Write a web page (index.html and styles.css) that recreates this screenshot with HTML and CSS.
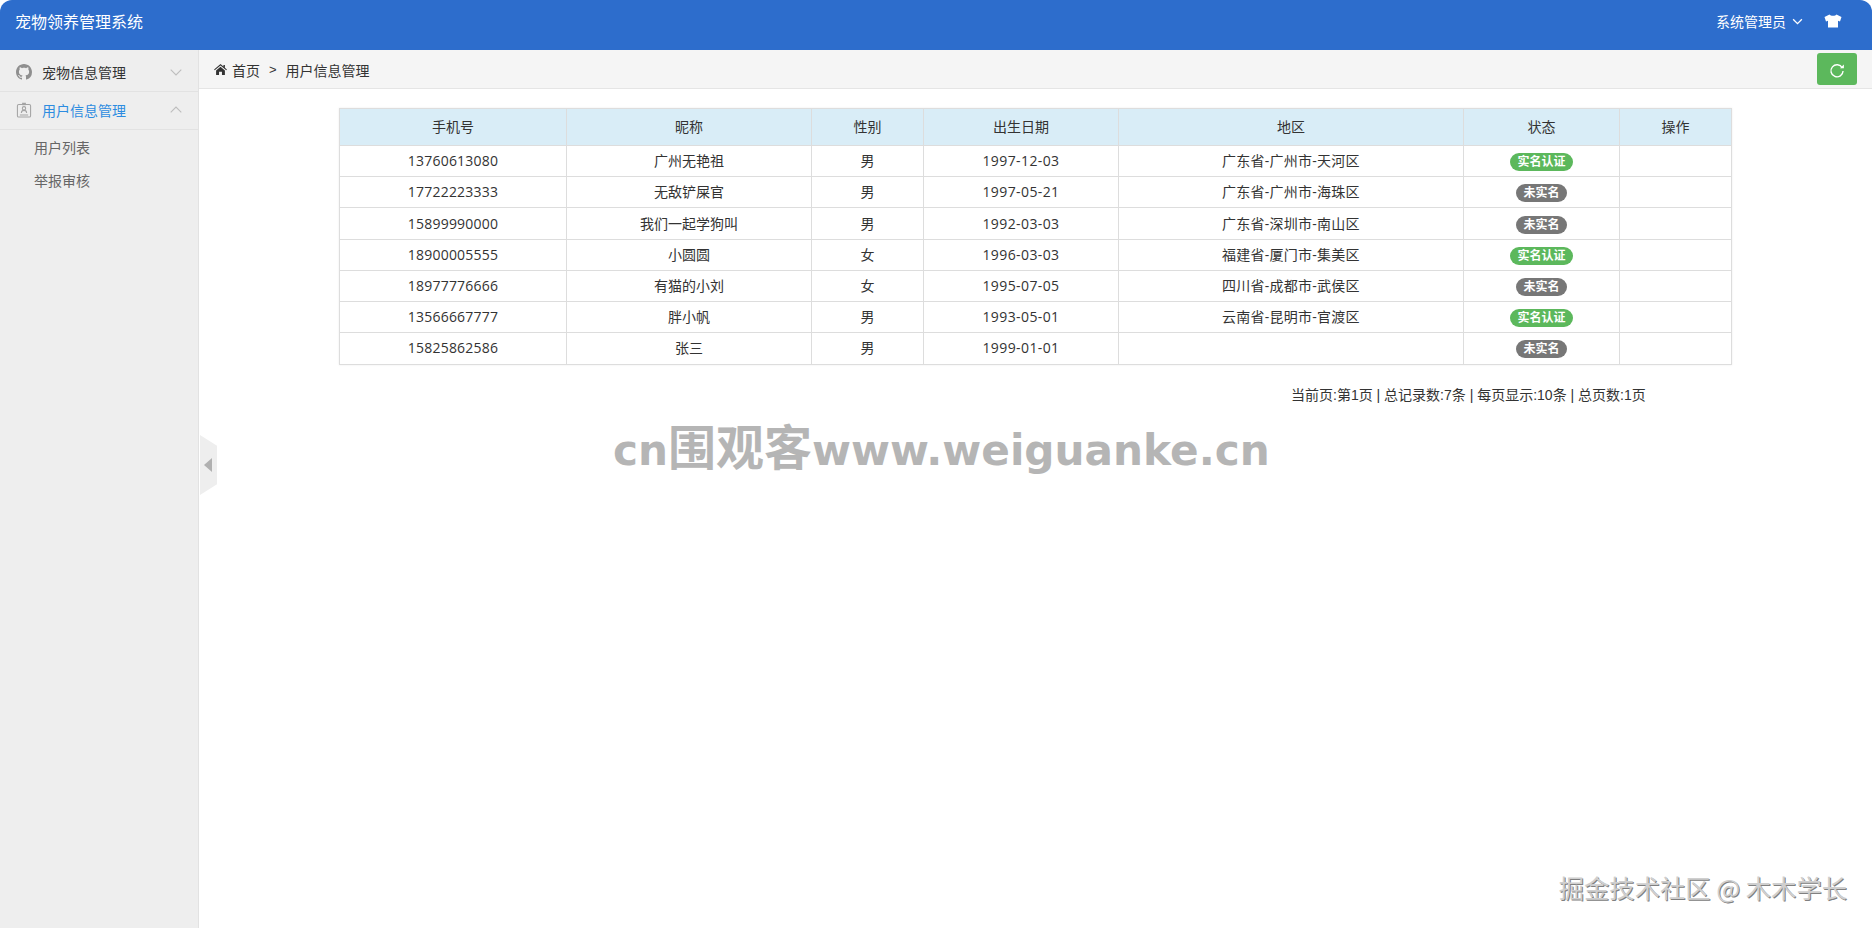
FILE: index.html
```html
<!DOCTYPE html>
<html lang="zh-CN">
<head>
<meta charset="utf-8">
<title>宠物领养管理系统</title>
<link rel="stylesheet" href="styles.css">
</head>
<body>
<div class="app">
  <header class="topbar">
    <div class="brand">宠物领养管理系统</div>
    <div class="top-right">
      <span class="user">系统管理员</span>
      <svg class="user-caret" viewBox="0 0 12 8"><path d="M1 1.5 6 6.5 11 1.5" fill="none" stroke="#fff" stroke-width="1.5"/></svg>
      <svg class="shirt" viewBox="0 0 18 14"><path d="M5.5 0.5 0.5 3 2 7.5 4 6.8V13.5H14V6.8L16 7.5 17.5 3 12.5 0.5C11.5 2.2 6.5 2.2 5.5 0.5Z" fill="#fff"/></svg>
    </div>
  </header>
  <div class="body-row">
    <aside class="sidebar">
      <div class="menu-item first">
        <svg class="menu-icon" viewBox="0 0 16 16"><path fill="#8f8f8f" d="M8 0C3.58 0 0 3.58 0 8c0 3.54 2.29 6.53 5.47 7.59.4.07.55-.17.55-.38 0-.19-.01-.82-.01-1.49-2.01.37-2.53-.49-2.69-.94-.09-.23-.48-.94-.82-1.13-.28-.15-.68-.52-.01-.53.63-.01 1.08.58 1.23.82.72 1.21 1.87.87 2.33.66.07-.52.28-.87.51-1.07-1.78-.2-3.64-.89-3.64-3.95 0-.87.31-1.59.82-2.15-.08-.2-.36-1.02.08-2.12 0 0 .67-.21 2.2.82.64-.18 1.32-.27 2-.27s1.36.09 2 .27c1.53-1.04 2.2-.82 2.2-.82.44 1.1.16 1.92.08 2.12.51.56.82 1.27.82 2.15 0 3.07-1.87 3.75-3.65 3.95.29.25.54.73.54 1.48 0 1.07-.01 1.93-.01 2.2 0 .21.15.46.55.38A8.01 8.01 0 0 0 16 8c0-4.42-3.58-8-8-8z"/></svg>
        <span class="menu-text">宠物信息管理</span>
        <svg class="chev" viewBox="0 0 12 7"><path d="M.7.7 6 6 11.3.7" fill="none" stroke="#bdbdbd" stroke-width="1.1"/></svg>
      </div>
      <div class="menu-item second">
        <svg class="menu-icon" viewBox="0 0 16 17"><g fill="none" stroke="#a3a3a3" stroke-width="1.1"><rect x="1" y="2.6" width="14" height="13.4" rx="1.5"/><rect x="6" y=".8" width="4" height="2.6" fill="#a3a3a3" stroke="none"/><path d="M5.2 11.6c0-2 1.2-2.7 2.8-2.7s2.8.7 2.8 2.7M3.6 13.7h8.8"/><circle cx="8" cy="6.7" r="1.8"/></g></svg>
        <span class="menu-text active">用户信息管理</span>
        <svg class="chev" viewBox="0 0 12 7"><path d="M.7 6.3 6 1 11.3 6.3" fill="none" stroke="#bdbdbd" stroke-width="1.1"/></svg>
      </div>
      <div class="sub-menu">
        <a class="sub-item">用户列表</a>
        <a class="sub-item">举报审核</a>
      </div>
    </aside>
    <main class="content">
      <div class="crumbs">
        <svg class="home" viewBox="0 0 14 12"><path fill="#333" d="M7 0 0 5.9l.7.8L7 1.5l6.3 5.2.7-.8-2.2-1.9V1h-1.6v1.6L7 0ZM2.2 7v5h3.2V8.4h3.2V12h3.2V7L7 3 2.2 7Z"/></svg>
        <span class="crumb-home">首页</span>
        <span class="crumb-sep">&gt;</span>
        <span class="crumb-cur">用户信息管理</span>
        <button class="refresh" type="button" aria-label="刷新">
          <svg viewBox="0 0 14 14"><path d="M11.6 4.2A5.3 5.3 0 1 0 12.3 7" fill="none" stroke="#fff" stroke-width="1.2"/><path d="M9.6 4.6h3.4V1.4Z" fill="#fff"/></svg>
        </button>
      </div>
      <table class="grid">
        <colgroup>
          <col class="c1"><col class="c2"><col class="c3"><col class="c4"><col class="c5"><col class="c6"><col class="c7">
        </colgroup>
        <thead>
          <tr><th>手机号</th><th>昵称</th><th>性别</th><th>出生日期</th><th>地区</th><th>状态</th><th>操作</th></tr>
        </thead>
        <tbody>
          <tr><td class="num">13760613080</td><td>广州无艳祖</td><td>男</td><td class="date">1997-12-03</td><td class="area">广东省-广州市-天河区</td><td><span class="badge ok">实名认证</span></td><td></td></tr>
          <tr><td class="num">17722223333</td><td>无敌铲屎官</td><td>男</td><td class="date">1997-05-21</td><td class="area">广东省-广州市-海珠区</td><td><span class="badge no">未实名</span></td><td></td></tr>
          <tr class="tall"><td class="num">15899990000</td><td>我们一起学狗叫</td><td>男</td><td class="date">1992-03-03</td><td class="area">广东省-深圳市-南山区</td><td><span class="badge no">未实名</span></td><td></td></tr>
          <tr><td class="num">18900005555</td><td>小圆圆</td><td>女</td><td class="date">1996-03-03</td><td class="area">福建省-厦门市-集美区</td><td><span class="badge ok">实名认证</span></td><td></td></tr>
          <tr><td class="num">18977776666</td><td>有猫的小刘</td><td>女</td><td class="date">1995-07-05</td><td class="area">四川省-成都市-武侯区</td><td><span class="badge no">未实名</span></td><td></td></tr>
          <tr><td class="num">13566667777</td><td>胖小帆</td><td>男</td><td class="date">1993-05-01</td><td class="area">云南省-昆明市-官渡区</td><td><span class="badge ok">实名认证</span></td><td></td></tr>
          <tr class="tall last"><td class="num">15825862586</td><td>张三</td><td>男</td><td class="date">1999-01-01</td><td></td><td><span class="badge no">未实名</span></td><td></td></tr>
        </tbody>
      </table>
      <div class="pager">当前页:第1页 | 总记录数:7条 | 每页显示:10条 | 总页数:1页</div>
    </main>
  </div>
  <div class="collapse-handle"><span class="collapse-arrow"></span></div>
  <div class="mark-site">cn<span class="mark-cjk">围观客</span>www.weiguanke.cn</div>
  <div class="mark-juejin">掘金技术社区 @ 木木学长</div>
</div>
</body>
</html>
```
FILE: styles.css
```css
* { box-sizing: border-box; }
html, body { margin: 0; height: 100%; background: #fff; }
body {
  font-family: "Noto Sans CJK SC", "Open Sans", sans-serif;
  font-size: 14px;
  color: #333;
  overflow: hidden;
}
.app {
  position: relative;
  height: 928px;
  display: flex;
  flex-direction: column;
  overflow: hidden;
}
.topbar {
  height: 50px;
  flex: none;
  background: #2d6dcc;
  border-radius: 12px 12px 0 0;
  color: #fff;
  display: flex;
  align-items: center;
  justify-content: space-between;
  padding: 0 30px 8px 15px;
}
.brand { font-size: 16px; line-height: 24px; margin-top: -1px; }
.top-right { display: flex; align-items: center; }
.user { font-size: 14px; line-height: 20px; margin-top: -1px; }
.user-caret { width: 11px; height: 7px; margin: 0 0 0 6px; }
.shirt { width: 18px; height: 14px; margin-left: 21px; }
.body-row { flex: 1; display: flex; min-height: 0; }
.sidebar {
  width: 199px;
  flex: none;
  background: #eee;
  border-right: 1px solid #e2e2e2;
}
.menu-item {
  display: flex;
  align-items: center;
  padding: 0 16px 0 16px;
  border-bottom: 1px solid #e2e2e2;
}
.menu-item.first { height: 42px; padding-top: 3px; }
.menu-item.second { height: 38px; padding-bottom: 2px; }
.menu-icon { width: 16px; height: 16px; flex: none; }
.menu-text { margin-left: 10px; flex: 1; line-height: 20px; color: #333; }
.menu-text.active { color: #2d8ce0; }
.chev { width: 12px; height: 7px; flex: none; }
.sub-menu { padding-top: 1px; }
.sub-item {
  display: block;
  height: 32.5px;
  line-height: 32px;
  padding-left: 34px;
  color: #666;
}
.content { flex: 1; min-width: 0; }
.crumbs {
  height: 39px;
  background: #f5f5f5;
  border-bottom: 1px solid #e5e5e5;
  display: flex;
  align-items: center;
  padding: 0 15px 0 15px;
  color: #333;
}
.home { width: 13px; height: 11px; flex: none; }
.crumb-home { margin-left: 5px; padding-top: 1px; }
.crumb-sep { margin: 0 9px; font-family: "Liberation Sans", sans-serif; font-size: 13px; padding-top: 1px; }
.crumb-cur { padding-top: 1px; }
.refresh {
  margin-left: auto;
  width: 40px;
  height: 32px;
  border: 0;
  border-radius: 3px;
  background: #5cb85c;
  padding: 0;
  display: flex;
  align-items: center;
  justify-content: center;
}
.refresh svg { width: 16px; height: 16px; margin-top: 3px; }
.grid {
  width: 1392px;
  margin: 19px 0 0 140px;
  border-collapse: collapse;
  table-layout: fixed;
  box-shadow: 0 0 2px rgba(0,0,0,.08);
}
.c1 { width: 227px; }
.c2 { width: 245px; }
.c3 { width: 112px; }
.c4 { width: 195px; }
.c5 { width: 345px; }
.c6 { width: 156px; }
.c7 { width: 112px; }
.grid th, .grid td {
  border: 1px solid #ddd;
  text-align: center;
  padding: 0;
  font-weight: 400;
  color: #333;
  line-height: 20px;
}
.grid th { height: 37px; background: #d9edf7; padding-bottom: 2px; }
.grid td { height: 31px; font-family: "Open Sans", "Noto Sans CJK SC", sans-serif; }
.grid tr.tall td { height: 32px; }
.grid tr.last td { padding-bottom: 2px; }
.grid td.num { letter-spacing: .2px; }
.grid td.date { letter-spacing: .4px; }
.grid td.area { letter-spacing: .25px; }
.badge {
  display: inline-block;
  height: 18px;
  line-height: 18px;
  border-radius: 9px;
  padding: 0 7px;
  font-size: 12px;
  font-weight: 700;
  color: #fff;
  vertical-align: middle;
  margin-top: 1px;
}
.grid tr.last .badge { margin-top: 3px; }
.badge.ok { background: #5cb85c; }
.badge.no { background: #777; }
.pager {
  margin-top: 20px;
  padding-left: 1092px;
  line-height: 20px;
  white-space: nowrap;
  font-family: "Liberation Sans", "Noto Sans CJK SC", sans-serif;
}
.collapse-handle {
  position: absolute;
  left: 200px;
  top: 435px;
  width: 17px;
  height: 60px;
  background: #eee;
  clip-path: polygon(0 0, 100% 18%, 100% 82%, 0 100%);
  display: flex;
  align-items: center;
  justify-content: center;
}
.collapse-arrow {
  width: 0;
  height: 0;
  border: 7px solid transparent;
  border-left: 0;
  border-right: 8px solid #b0b0b0;
  margin-left: -2px;
}
.mark-site {
  position: absolute;
  left: 613px;
  top: 414px;
  font-family: "DejaVu Sans", sans-serif;
  font-size: 42.2px;
  font-weight: 700;
  line-height: 60px;
  color: #b5b5b5;
  white-space: nowrap;
}
.mark-cjk {
  font-family: "Noto Sans CJK SC", sans-serif;
  font-size: 48px;
}
.mark-juejin {
  position: absolute;
  right: 25px;
  top: 869px;
  font-family: "Noto Sans CJK SC", sans-serif;
  font-size: 25.3px;
  font-weight: 400;
  line-height: 36px;
  color: #cfcfcf;
  text-shadow: 1px 1px 0 #808080;
  white-space: nowrap;
}
```
